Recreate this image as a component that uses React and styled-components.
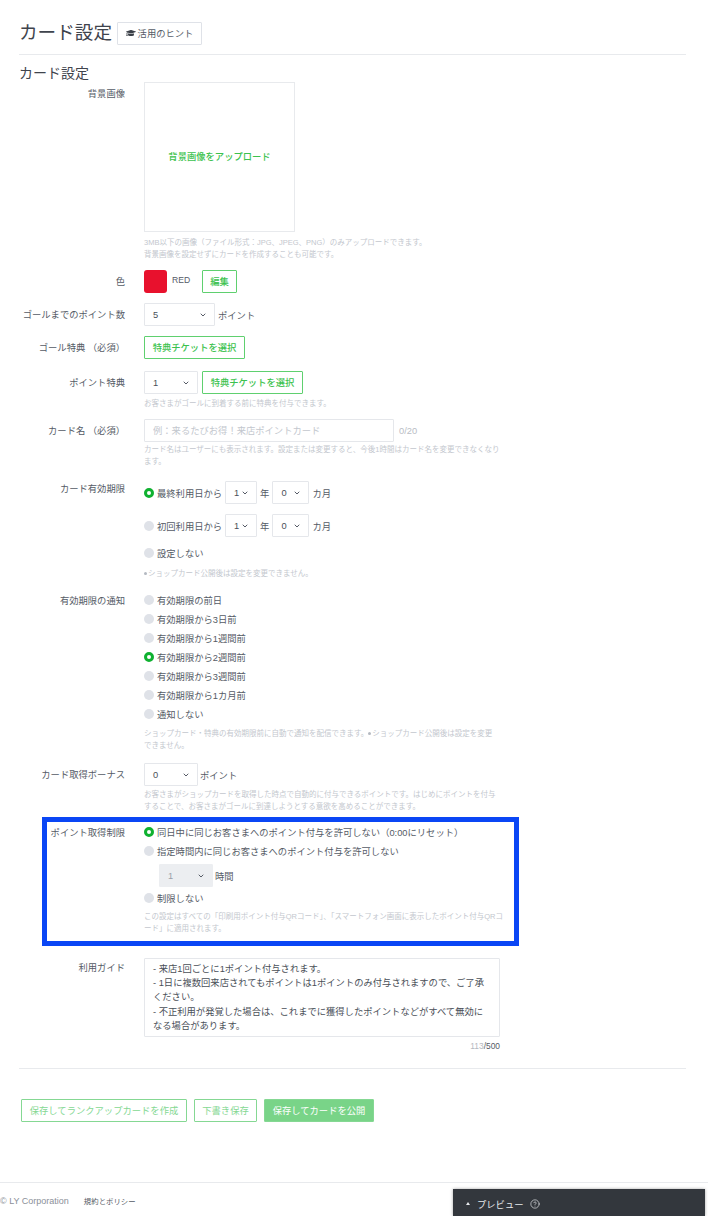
import React from 'react'
import styled, { createGlobalStyle } from 'styled-components'
import { FaGraduationCap } from 'react-icons/fa'
import { ChevronDown, CircleHelp } from 'lucide-react'

const GlobalStyle = createGlobalStyle`
  html, body {
    margin: 0;
    padding: 0;
    background: #fff;
    font-family: "Liberation Sans", "Noto Sans CJK JP", sans-serif;
    color: #4a4f58;
  }
  * { box-sizing: border-box; }
`

const notifyOptions = [
  ['有効期限の前日', false],
  ['有効期限から3日前', false],
  ['有効期限から1週間前', false],
  ['有効期限から2週間前', true],
  ['有効期限から3週間前', false],
  ['有効期限から1カ月前', false],
  ['通知しない', false],
]

function Select({ value, width, disabled }) {
  return (
    <SelectBox $width={width} $disabled={disabled}>
      {value}
      <ChevronDown size={8} strokeWidth={3} color="#555b66" />
    </SelectBox>
  )
}

function Radio({ checked, children }) {
  return (
    <RadioLabel>
      <RadioDot $checked={checked} />
      {children}
    </RadioLabel>
  )
}

function ExpiryRow({ checked, text }) {
  return (
    <InlineRow $gap={3}>
      <Radio checked={checked}>{text}</Radio>
      <Select value="1" width={32} />
      <Unit>年</Unit>
      <Select value="0" width={37} />
      <Unit>カ月</Unit>
    </InlineRow>
  )
}

export default function App() {
  return (
    <Page>
      <GlobalStyle />
      <Main>
        <Header>
          <Title>カード設定</Title>
          <HintButton>
            <FaGraduationCap size={10} color="#3a3f47" />
            活用のヒント
          </HintButton>
        </Header>

        <SectionTitle>カード設定</SectionTitle>

        <Row>
          <Label>背景画像</Label>
          <Field>
            <UploadBox>背景画像をアップロード</UploadBox>
            <Help $top={4}>
              3MB以下の画像（ファイル形式：JPG、JPEG、PNG）のみアップロードできます。
              <br />
              背景画像を設定せずにカードを作成することも可能です。
            </Help>
          </Field>
        </Row>

        <Row $top={10}>
          <Label>色</Label>
          <InlineRow>
            <Swatch />
            <ColorName>RED</ColorName>
            <OutlineButton $width={35}>編集</OutlineButton>
          </InlineRow>
        </Row>

        <Row $top={10}>
          <Label>ゴールまでのポイント数</Label>
          <InlineRow $gap={3}>
            <Select value="5" width={71} />
            <Unit>ポイント</Unit>
          </InlineRow>
        </Row>

        <Row $top={10}>
          <Label>ゴール特典 （必須）</Label>
          <InlineRow>
            <OutlineButton $width={101}>特典チケットを選択</OutlineButton>
          </InlineRow>
        </Row>

        <Row $top={12}>
          <Label>ポイント特典</Label>
          <Field>
            <InlineRow $gap={4}>
              <Select value="1" width={54} />
              <OutlineButton $width={101}>特典チケットを選択</OutlineButton>
            </InlineRow>
            <Help $top={3}>お客さまがゴールに到着する前に特典を付与できます。</Help>
          </Field>
        </Row>

        <Row $top={10}>
          <Label>カード名 （必須）</Label>
          <Field>
            <InlineRow $gap={5}>
              <NameInput placeholder="例：来るたびお得！来店ポイントカード" readOnly />
              <NameCount>0/20</NameCount>
            </InlineRow>
            <Help $top={1}>
              カード名はユーザーにも表示されます。設定または変更すると、今後1時間はカード名を変更できなくなり
              <br />
              ます。
            </Help>
          </Field>
        </Row>

        <Row $top={14}>
          <Label $flush>カード有効期限</Label>
          <Field>
            <ExpiryRow checked text="最終利用日から" />
            <Spaced $top={10}>
              <ExpiryRow text="初回利用日から" />
            </Spaced>
            <Spaced $top={9}>
              <Radio>設定しない</Radio>
            </Spaced>
            <Help $top={7}>
              <Mark />
              ショップカード公開後は設定を変更できません。
            </Help>
          </Field>
        </Row>

        <Row $top={14}>
          <Label $flush>有効期限の通知</Label>
          <Field>
            <RadioStack>
              {notifyOptions.map(([text, checked]) => (
                <Radio key={text} checked={checked}>
                  {text}
                </Radio>
              ))}
            </RadioStack>
            <Help $top={6}>
              ショップカード・特典の有効期限前に自動で通知を配信できます。
              <Mark />
              ショップカード公開後は設定を変更
              <br />
              できません。
            </Help>
          </Field>
        </Row>

        <Row $top={12}>
          <Label>カード取得ボーナス</Label>
          <Field>
            <InlineRow $gap={2}>
              <Select value="0" width={54} />
              <Unit>ポイント</Unit>
            </InlineRow>
            <Help $top={2}>
              お客さまがショップカードを取得した時点で自動的に付与できるポイントです。はじめにポイントを付与
              <br />
              することで、お客さまがゴールに到達しようとする意欲を高めることができます。
            </Help>
          </Field>
        </Row>

        <HighlightRow $top={13}>
          <Label $flush>ポイント取得制限</Label>
          <Field>
            <RadioStack>
              <Radio checked>同日中に同じお客さまへのポイント付与を許可しない（0:00にリセット）</Radio>
              <Radio>指定時間内に同じお客さまへのポイント付与を許可しない</Radio>
            </RadioStack>
            <HourRow>
              <Select value="1" width={54} disabled />
              <Unit>時間</Unit>
            </HourRow>
            <Spaced $top={4}>
              <Radio>制限しない</Radio>
            </Spaced>
            <Help $top={5}>
              この設定はすべての「印刷用ポイント付与QRコード」、「スマートフォン画面に表示したポイント付与QRコ
              <br />
              ード」に適用されます。
            </Help>
          </Field>
        </HighlightRow>

        <Row $top={24}>
          <Label $top={3}>利用ガイド</Label>
          <Field>
            <GuideBox>
              - 来店1回ごとに1ポイント付与されます。
              <br />
              - 1日に複数回来店されてもポイントは1ポイントのみ付与されますので、ご了承ください。
              <br />
              - 不正利用が発覚した場合は、これまでに獲得したポイントなどがすべて無効になる場合があります。
            </GuideBox>
            <GuideCount>
              <span>113</span>/500
            </GuideCount>
          </Field>
        </Row>

        <Divider />

        <Actions>
          <FadedButton $width={166}>保存してランクアップカードを作成</FadedButton>
          <FadedButton $width={63}>下書き保存</FadedButton>
          <FadedButton $width={110} $solid>
            保存してカードを公開
          </FadedButton>
        </Actions>
      </Main>

      <Footer>
        <Copyright>© LY Corporation</Copyright>
        <FooterLink>規約とポリシー</FooterLink>
      </Footer>

      <PreviewBar>
        <PreviewArrow />
        プレビュー
        <CircleHelp size={10} color="#e8eaed" strokeWidth={1.6} />
      </PreviewBar>
    </Page>
  )
}

const Page = styled.div`
  position: relative;
  width: 708px;
  height: 1216px;
  overflow: hidden;
`

const Main = styled.main`
  padding: 22px 22px 0 19px;
`

const Header = styled.header`
  display: flex;
  align-items: center;
  gap: 5px;
  padding-bottom: 9px;
  border-bottom: 1px solid #e8eaed;
  box-sizing: content-box;
  height: 23px;
`

const Title = styled.h1`
  margin: 0 0 2px;
  font-size: 18.6px;
  font-weight: 400;
  line-height: 23px;
  color: #3f444d;
`

const HintButton = styled.div`
  display: flex;
  align-items: center;
  justify-content: center;
  gap: 2px;
  width: 85px;
  height: 23px;
  padding-bottom: 1px;
  border: 1px solid #dfe2e8;
  border-radius: 1px;
  font-size: 9.3px;
  color: #555b66;
`

const SectionTitle = styled.h2`
  margin: 9px 0 0;
  font-size: 14px;
  font-weight: 400;
  line-height: 18px;
  color: #3f444d;
`

const Row = styled.div`
  display: grid;
  grid-template-columns: 106px 356px;
  column-gap: 19px;
  margin-top: ${props => props.$top || 0}px;
`

const HighlightRow = styled(Row)`
  position: relative;

  &::after {
    content: '';
    position: absolute;
    top: -8px;
    bottom: -12px;
    left: 23px;
    right: 167px;
    border: 5px solid #0a46f5;
    pointer-events: none;
  }
`

const Label = styled.div`
  padding-top: ${props => (props.$flush ? 1 : props.$top ?? 5)}px;
  font-size: 9.3px;
  line-height: 14px;
  text-align: right;
  white-space: nowrap;
  color: #555b66;
`

const Field = styled.div`
  min-width: 0;
`

const Spaced = styled.div`
  margin-top: ${props => props.$top}px;
`

const InlineRow = styled.div`
  display: flex;
  align-items: center;
  gap: ${props => props.$gap || 0}px;
`

const UploadBox = styled.div`
  display: flex;
  align-items: center;
  justify-content: center;
  width: 151px;
  height: 150px;
  padding-bottom: 2px;
  border: 1px solid #e8eaed;
  font-size: 9.3px;
  font-weight: 500;
  color: #3cc24e;
`

const Help = styled.p`
  margin: ${props => (props.$top || 0) + 1}px 0 -1px;
  font-size: 7.5px;
  line-height: 12px;
  white-space: nowrap;
  color: #c3c7ce;
`

const Mark = styled.span`
  display: inline-block;
  width: 3px;
  height: 3px;
  margin: 0 1px 1px 0;
  border-radius: 50%;
  background: #b4b9c1;
`

const Swatch = styled.div`
  width: 23px;
  height: 23px;
  border-radius: 3px;
  background: #e8112d;
`

const ColorName = styled.span`
  width: 35px;
  padding-left: 5px;
  font-size: 8.6px;
  line-height: 20px;
  align-self: flex-start;
  color: #555b66;
`

const OutlineButton = styled.div`
  display: flex;
  align-items: center;
  justify-content: center;
  width: ${props => props.$width}px;
  height: 23px;
  padding-bottom: 1px;
  border: 1px solid #5fd06f;
  border-radius: 1px;
  font-size: 9.3px;
  font-weight: 500;
  color: #3cc24e;
`

const SelectBox = styled.div`
  display: flex;
  align-items: center;
  justify-content: space-between;
  width: ${props => props.$width}px;
  height: 23px;
  padding: 0 7px 0 8px;
  border: 1px solid ${props => (props.$disabled ? '#eceef1' : '#e5e7eb')};
  border-radius: 1px;
  background: ${props => (props.$disabled ? '#eceef1' : '#fff')};
  font-size: 9.3px;
  color: ${props => (props.$disabled ? '#9a9fa8' : '#4a4f58')};
`

const Unit = styled.span`
  font-size: 9.3px;
  color: #555b66;
`

const NameInput = styled.input`
  width: 250px;
  height: 23px;
  padding: 0 8px;
  border: 1px solid #e5e7eb;
  border-radius: 1px;
  outline: none;
  font-family: inherit;
  font-size: 9.3px;

  &::placeholder {
    color: #c3c7ce;
  }
`

const NameCount = styled.span`
  font-size: 9.3px;
  color: #b9bdc5;
`

const RadioStack = styled.div`
  display: flex;
  flex-direction: column;
  gap: 5px;
`

const RadioLabel = styled.label`
  display: flex;
  align-items: center;
  gap: 3px;
  height: 14px;
  font-size: 9.3px;
  white-space: nowrap;
  color: #555b66;
`

const RadioDot = styled.span`
  flex: none;
  width: 10px;
  height: 10px;
  border-radius: 50%;
  background: ${props => (props.$checked ? '#fff' : '#dfe2e8')};
  border: ${props => (props.$checked ? '3px solid #0fb130' : 'none')};
`

const HourRow = styled.div`
  display: flex;
  align-items: center;
  gap: 2px;
  margin: 6px 0 0 15px;
`

const GuideBox = styled.div`
  height: 79px;
  padding: 3px 8px;
  border: 1px solid #e5e7eb;
  border-radius: 1px;
  font-size: 9.3px;
  line-height: 14.2px;
  color: #4a4f58;
`

const GuideCount = styled.div`
  margin-top: 3px;
  font-size: 8.4px;
  line-height: 12px;
  text-align: right;
  color: #555b66;

  span {
    color: #b4b9c1;
  }
`

const Divider = styled.hr`
  margin: 16px 0 0;
  border: 0;
  border-top: 1px solid #e8eaed;
`

const Actions = styled.div`
  display: flex;
  gap: 7px;
  margin: 30px 0 0 2px;
`

const FadedButton = styled.div`
  display: flex;
  align-items: center;
  justify-content: center;
  width: ${props => props.$width}px;
  height: 23px;
  padding-bottom: 1px;
  border: 1px solid #85d893;
  border-radius: 1px;
  background: ${props => (props.$solid ? '#79d488' : '#fff')};
  font-size: 9.3px;
  color: ${props => (props.$solid ? '#fff' : '#85d893')};
`

const Footer = styled.footer`
  display: flex;
  align-items: center;
  gap: 15px;
  height: 34px;
  margin-top: 60px;
  padding-top: 2px;
  border-top: 1px solid #e8eaed;
`

const Copyright = styled.span`
  font-size: 9px;
  color: #8b9099;
`

const FooterLink = styled.span`
  font-size: 7.4px;
  color: #555b66;
`

const PreviewBar = styled.div`
  position: absolute;
  left: 453px;
  bottom: 0;
  display: flex;
  align-items: center;
  width: 252px;
  height: 27px;
  padding: 2px 0 0 13px;
  gap: 6px;
  background: #33373d;
  box-shadow: 0 0 3px rgba(0, 0, 0, 0.35);
  font-size: 9.3px;
  color: #e8eaed;
`

const PreviewArrow = styled.span`
  width: 0;
  height: 0;
  margin-right: 1px;
  border-left: 2.5px solid transparent;
  border-right: 2.5px solid transparent;
  border-bottom: 3px solid #e8eaed;
`
